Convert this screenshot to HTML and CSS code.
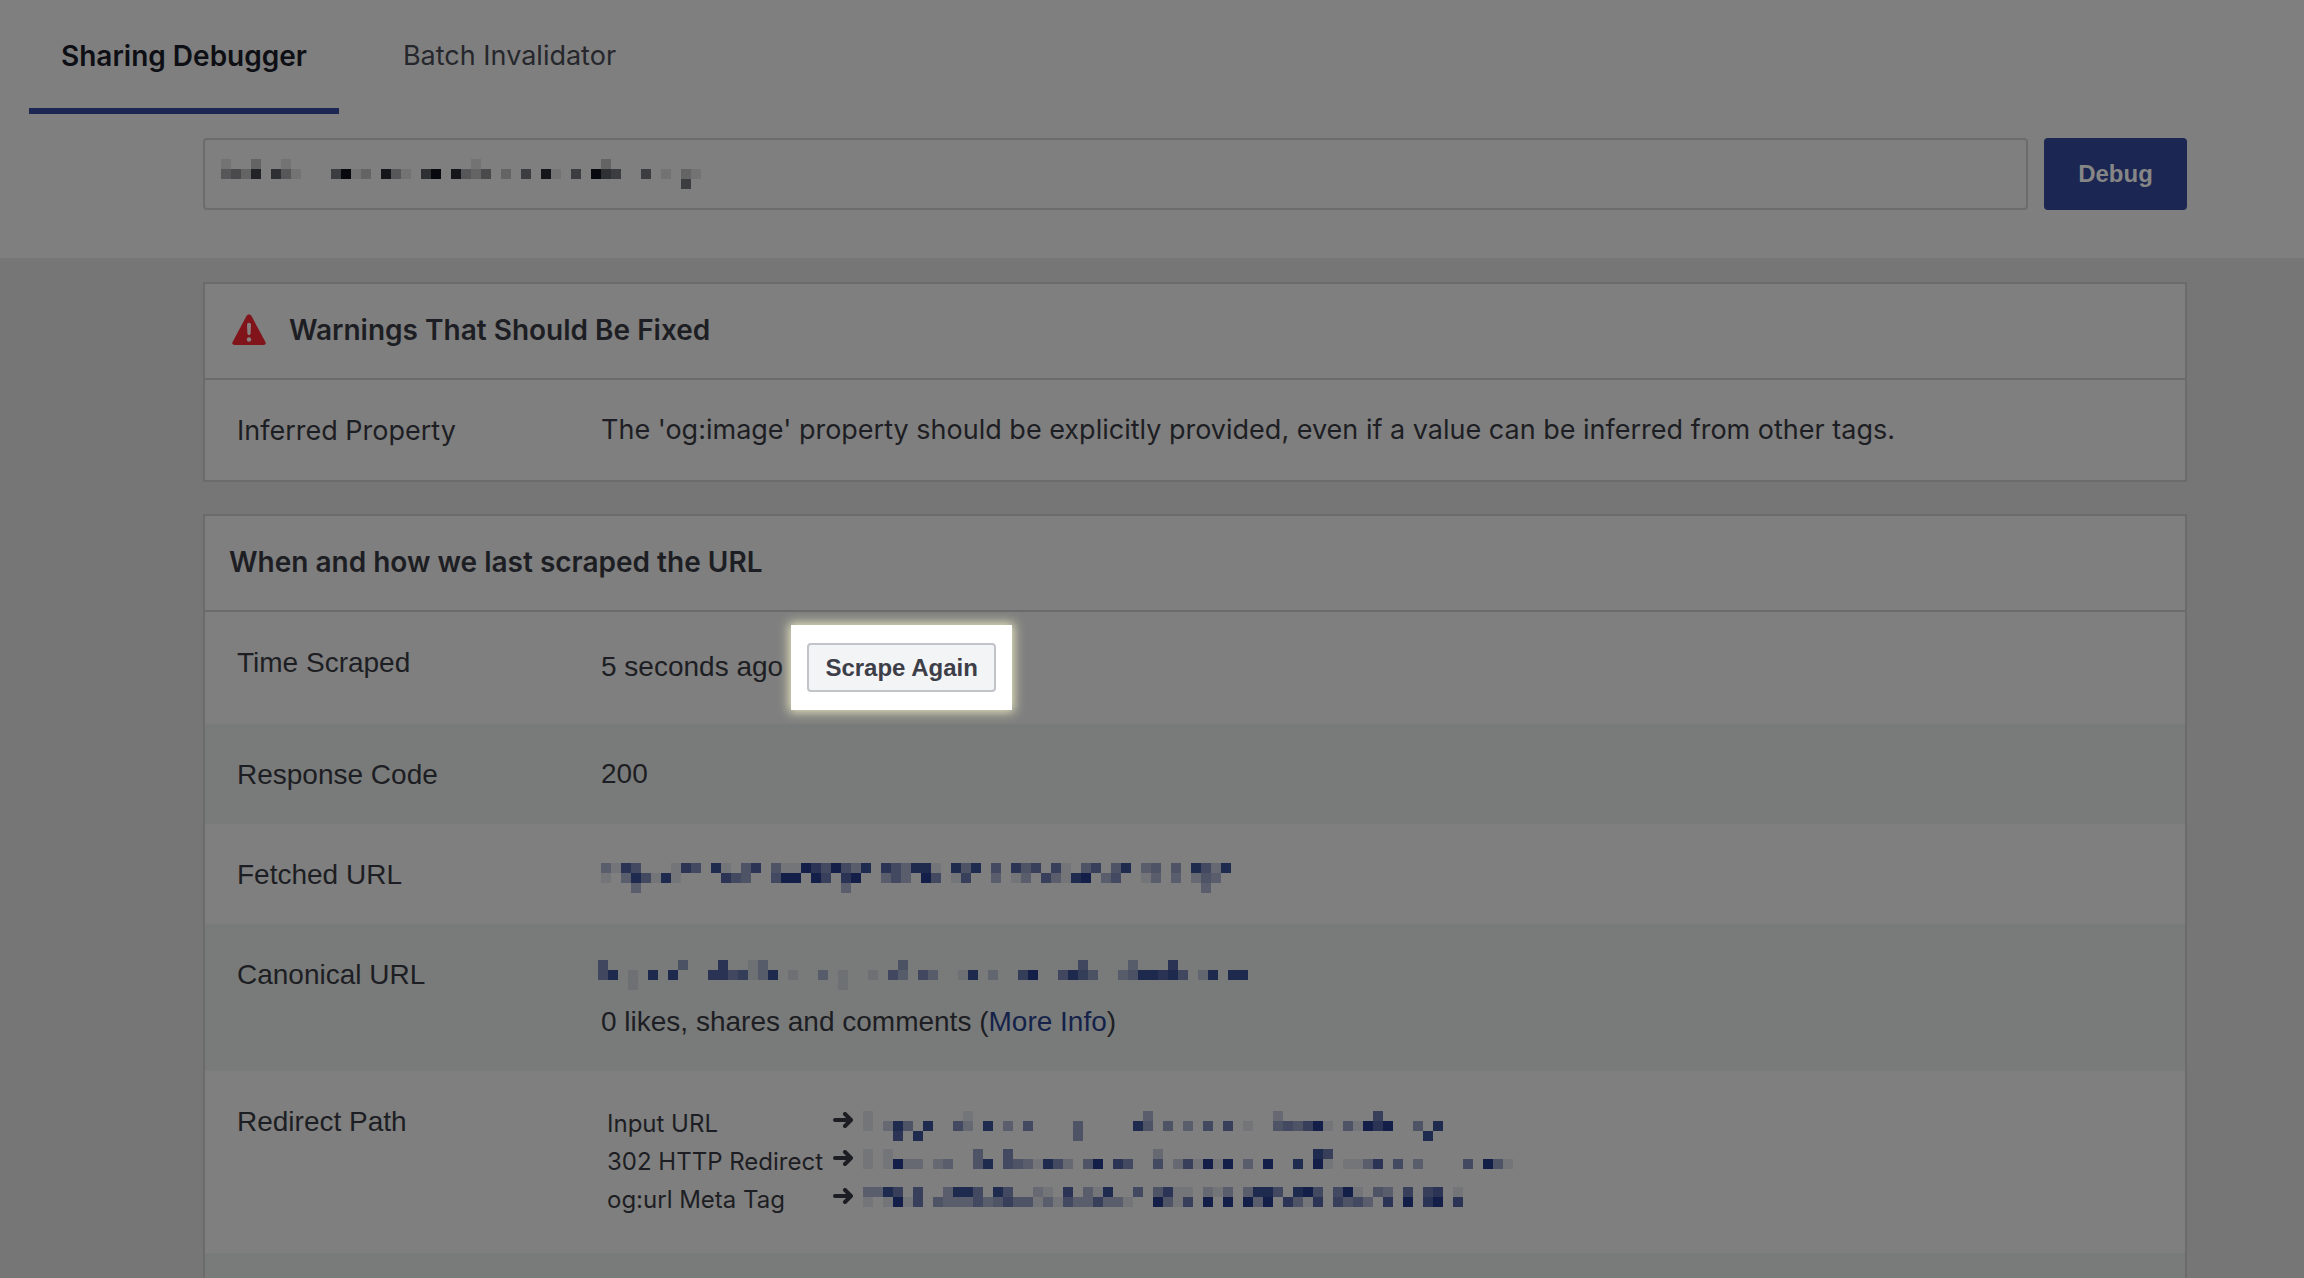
FILE: index.html
```html
<!DOCTYPE html>
<html lang="en">
<head>
<meta charset="utf-8">
<title>Sharing Debugger</title>
<link rel="stylesheet" href="styles.css">
</head>
<body>
<header class="top">
  <nav class="tabs">
    <a class="tab tab-active" href="#sharing">Sharing Debugger</a>
    <a class="tab" href="#batch">Batch Invalidator</a>
  </nav>
  <form class="search">
    <div class="field">
      <input class="field-input" type="text" aria-label="URL">
      <svg class="mosaic mosaic-dark" data-cells="0:1 3:2 6:1 25:1 38:2|0:3427 5:631 11:5912 16:831 20:69 23:8324 28:2 30:5 32:81 35:5 37:965 42:5 44:1 46:21|46:5"></svg>
    </div>
    <button class="debug" type="button">Debug</button>
  </form>
</header>
<main class="content">
  <section class="panel">
    <h2 class="panel-title panel-title-icon">
      <svg class="warn" viewBox="0 0 34 32" width="34" height="32" aria-hidden="true">
        <path d="M14.600 1.800Q17 -1.400 19.400 1.800L33.400 28Q34.400 31 31.500 31H2.500Q-.4 31 .6 28Z" fill="#80141a"/>
        <path d="M15 10.500Q15 8.700 17 8.700T19 10.500L18.600 19.500Q18.400 21 17 21T15.400 19.500Z" fill="#868080"/>
        <circle cx="17" cy="25.500" r="2.200" fill="#868080"/>
      </svg>
      Warnings That Should Be Fixed
    </h2>
    <table class="data data-ui">
      <tr><th scope="row">Inferred Property</th><td>The 'og:image' property should be explicitly provided, even if a value can be inferred from other tags.</td></tr>
    </table>
  </section>
  <section class="panel panel-open">
    <h2 class="panel-title">When and how we last scraped the URL</h2>
    <table class="data">
      <tr>
        <th scope="row">Time Scraped</th>
        <td class="cell-action"><div class="action"><span class="age">5 seconds ago</span><span class="spotlight"><button class="scrape" type="button">Scrape Again</button></span></div></td>
      </tr>
      <tr><th scope="row">Response Code</th><td>200</td></tr>
      <tr>
        <th scope="row">Fetched URL</th>
        <td><a class="url" href="#fetched" aria-label="Fetched URL"><svg class="mosaic" data-cells="0:3175 7:175 11:81 14:47 17:411975953 26:8 28:753881 35:848 39:5 41:746 45:61 48:46 51:48 54:34 57:4 59:8528|0:1 2:3851 6:81 12:754 17:599 21:96 24:79 28:353 32:95 35:16 39:3 41:13 44:63189 50:35 54:13 57:3 59:243|3:3 24:3 60:3"></svg></a></td>
      </tr>
      <tr>
        <th scope="row">Canonical URL</th>
        <td><a class="url url-canonical" href="#canonical" aria-label="Canonical URL"><svg class="mosaic" data-cells="0:5 8:4 12:7 15:13 30:4 48:5 53:3 57:7|0:58 3:1 5:8 7:8 11:7756138 19:1 22:3 24:1 27:1 29:53 32:53 36:18 39:2 42:69 46:5864 52:3488785 60:28 63:88|3:1 24:1"></svg></a><div>0 likes, shares and comments (<a class="link" href="#more">More Info</a>)</div></td>
      </tr>
      <tr>
        <th scope="row">Redirect Path</th>
        <td class="cell-path">
          <ol class="path">
            <li class="hop"><span>Input URL</span><svg class="arrow" viewBox="0 0 20 16" width="20" height="16" aria-hidden="true"><path d="M2 8H18M12 2L18 8L12 14"/></svg><a class="hop-url" href="#input" aria-label="Input URL"><svg class="mosaic" data-cells="0:1 10:1 28:3 41:2 51:6|0:1 2:284 6:8 9:52 12:8 14:3 16:5 21:4 27:84 30:4 32:3 34:5 36:6 38:1 41:454691 48:41979 55:4 57:8|3:7 5:8 21:4 56:8"></svg></a></li>
            <li class="hop"><span>302 HTTP Redirect</span><svg class="arrow" viewBox="0 0 20 16" width="20" height="16" aria-hidden="true"><path d="M2 8H18M12 2L18 8L12 14"/></svg><a class="hop-url" href="#redirect" aria-label="302 HTTP Redirect"><svg class="mosaic" data-cells="0:1 2:1 11:4 14:5 29:2 45:86|0:1 2:1922 7:23 11:48 14:5431852 22:49 25:75 29:5 31:261919 38:3 40:9 43:8 45:91 48:1137 53:5 55:3 60:5 62:941|"></svg></a></li>
            <li class="hop"><span>og:url Meta Tag</span><svg class="arrow" viewBox="0 0 20 16" width="20" height="16" aria-hidden="true"><path d="M2 8H18M12 2L18 8L12 14"/></svg><a class="hop-url" href="#meta" aria-label="og:url Meta Tag"><svg class="mosaic" data-cells="0:3386 5:6 8:3885 13:85 17:21 20:7 22:318 27:5 29:4711 34:213 38:3885 43:895 47:591 51:43 54:6 56:67 59:1|0:1 2:1916 7:43335346441315336331 29:9416 34:9 36:9 38:939 42:7417 47:6453 52:7 54:9 56:79 59:7|"></svg></a></li>
          </ol>
        </td>
      </tr>
      <tr class="row-next"><td colspan="2"></td></tr>
    </table>
  </section>
</main>
<script src="mosaic.js"></script>
</body>
</html>
```
FILE: styles.css
```css
* { box-sizing: border-box; }
body {
  margin: 0;
  background: #767676;
  color: #1d1e23;
  font: 28px/40px "Liberation Sans", Arial, sans-serif;
}
a { color: #14224a; text-decoration: none; }

.top { background: #7f7f7f; padding-bottom: 48px; }
.tabs { display: flex; gap: 32px; padding-left: 29px; height: 114px; }
.tab {
  padding: 36px 32px 0;
  border-bottom: 6px solid transparent;
  color: #26272c;
  font-family: Inter, sans-serif;
  font-size: 27px;
}
.tab-active { border-color: #1b2752; color: #0e0f14; font-size: 28px; font-weight: 600; }

.search { display: flex; gap: 16px; margin: 24px 117px 0 203px; }
.field { flex: 1; display: grid; align-items: center; }
.field > * { grid-area: 1 / 1; }
.field-input {
  width: 100%;
  height: 72px;
  padding: 0 16px;
  border: 2px solid #6b6c6e;
  border-radius: 4px;
  background: #7f7f7f;
  color: inherit;
  font: inherit;
}
.field .mosaic { margin-left: 18px; pointer-events: none; }
.debug {
  width: 143px;
  height: 72px;
  border: 0;
  border-radius: 4px;
  background: #1b2752;
  color: #868686;
  font: bold 24px/40px "Liberation Sans", Arial, sans-serif;
}

.content { display: grid; gap: 32px; padding: 24px 117px 0 203px; }
.panel { border: 2px solid #6b6b6b; background: #7f7f7f; }
.panel-open { border-bottom: 0; }
.panel-title {
  display: flex;
  align-items: center;
  height: 96px;
  margin: 0;
  padding: 0 24px 2px;
  border-bottom: 2px solid #6b6b6b;
  font: 600 28px/40px Inter, sans-serif;
}
.panel-title-icon { gap: 23px; padding-left: 27px; }

.data { width: 100%; border-collapse: collapse; table-layout: fixed; }
.data th, .data td { padding: 30px 0; vertical-align: top; text-align: left; }
.data th { width: 396px; padding: 31px 0 29px 32px; font-weight: normal; }
.data td { padding-bottom: 29px; }
.data tr:nth-child(even) { background: #797b7a; }
.data-ui { font-family: Inter, sans-serif; font-size: 27px; }
.data .cell-action { padding: 13px 0 14px; }
.data .cell-path { padding: 34px 0; }
.data .row-next td { padding: 0; height: 26px; }

.action { display: flex; align-items: center; gap: 8px; }
.age { padding-bottom: 2px; }
.spotlight {
  display: flex;
  padding: 18px 16px;
  background: #fff;
  box-shadow: 0 0 10px 2px #e8e8c0;
}
.scrape {
  width: 189px;
  height: 49px;
  padding: 0;
  border: 2px solid #c3c4c9;
  border-radius: 4px;
  background: #f3f4f6;
  color: #3d3e48;
  font: bold 24px/40px "Liberation Sans", Arial, sans-serif;
}

.mosaic { display: block; width: 660px; height: 30px; fill: #131f49; }
.mosaic-dark { width: 480px; fill: #08090e; }
.url { display: block; padding: 9px 0 0; height: 40px; }
.url-canonical { height: 48px; padding-top: 6px; margin-left: -3px; }

.path { margin: 0; padding: 0 0 0 6px; list-style: none; font: 24px/38px Inter, sans-serif; }
.hop { display: grid; grid-template-columns: 226px 30px 1fr; height: 38px; }
.arrow { margin-top: 7px; fill: none; stroke: #1d1e23; stroke-width: 4; stroke-linecap: round; stroke-linejoin: round; }
.hop-url { padding-top: 6px; }
```
FILE: mosaic.js
```js
// Rows are split by "|"; each run is "startColumn:levels", one digit (1-9) per 10px cell.
document.querySelectorAll('.mosaic').forEach(function (svg) {
  svg.dataset.cells.split('|').forEach(function (row, y) {
    row.split(' ').filter(Boolean).forEach(function (run) {
      var parts = run.split(':');
      parts[1].split('').forEach(function (level, i) {
        var cell = document.createElementNS('http://www.w3.org/2000/svg', 'rect');
        cell.setAttribute('x', (Number(parts[0]) + i) * 10);
        cell.setAttribute('y', y * 10);
        cell.setAttribute('width', 10);
        cell.setAttribute('height', 10);
        cell.setAttribute('opacity', level === '1' ? 0.1 : level / 9);
        svg.appendChild(cell);
      });
    });
  });
});
```
